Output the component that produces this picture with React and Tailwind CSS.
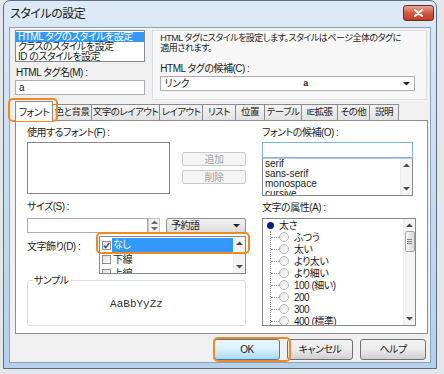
import React from "react";

const ui = "[font-family:'Liberation_Sans','Noto_Sans_CJK_JP',sans-serif] [font-feature-settings:'palt'] tracking-[-0.5px]";

function Up({ c = "#4a4a4a" }) {
  return (
    <svg width="7" height="4" viewBox="0 0 7 4">
      <path d="M0 4 L3.5 0.5 L7 4 Z" fill={c} />
    </svg>
  );
}

function Down({ c = "#4a4a4a" }) {
  return (
    <svg width="7" height="4" viewBox="0 0 7 4">
      <path d="M0 0 L3.5 3.5 L7 0 Z" fill={c} />
    </svg>
  );
}

function ScrollBar({ className = "", thumb = false }) {
  return (
    <div className={`w-[12px] flex flex-col items-center justify-between bg-[#f4f4f4] border-l border-[#ececec] ${className}`}>
      <div className="h-[12px] flex items-center justify-center">
        <Up />
      </div>
      {thumb && (
        <div className="w-[10px] h-[21px] -mt-[62px] rounded-[2px] border border-[#a6a6a6] bg-gradient-to-r from-[#f4f4f4] to-[#d9d9d9] flex flex-col items-center justify-center gap-[1px]">
          <div className="w-[5px] h-px bg-[#808080]" />
          <div className="w-[5px] h-px bg-[#808080]" />
          <div className="w-[5px] h-px bg-[#808080]" />
        </div>
      )}
      <div className="h-[12px] flex items-center justify-center">
        <Down />
      </div>
    </div>
  );
}

function Tab({ label, w, active }) {
  if (active) {
    return (
      <div className={`${w} h-[20px] -mb-px relative z-10 bg-white border border-b-0 border-[#898c95] flex items-center justify-center text-[10px] pt-px`}>
        {label}
      </div>
    );
  }
  return (
    <div className={`${w} h-[16px] -ml-px bg-gradient-to-b from-[#f3f3f3] to-[#e2e2e2] border border-b-0 border-[#898c95] flex items-center justify-center text-[9.5px] whitespace-nowrap overflow-hidden`}>
      {label}
    </div>
  );
}

function Radio({ label }) {
  return (
    <div className="flex items-center h-[12px]">
      <div className="w-[8px] border-t border-dotted border-[#8a8a8a]" />
      <div className="w-[10px] h-[10px] rounded-full border border-[#b4b4b4] bg-gradient-to-br from-[#e6e6e6] to-white" />
      <span className="ml-[5px] whitespace-nowrap">{label}</span>
    </div>
  );
}

function Btn({ label, def, disabled }) {
  if (disabled) {
    return (
      <div className="w-[64px] h-[14px] border border-[#c9cccf] rounded-[2px] bg-[#f4f4f4] text-[#a3a3a3] flex items-center justify-center text-[10px]">
        {label}
      </div>
    );
  }
  return (
    <div
      className={`w-[66px] h-[21px] rounded-[3px] border flex items-center justify-center text-[10px] ${
        def
          ? "border-[#3c7fb1] bg-gradient-to-b from-[#eaf6fd] via-[#d9f0fc] to-[#a7d9f5]"
          : "border-[#707070] bg-gradient-to-b from-[#f2f2f2] via-[#ebebeb] to-[#cfcfcf]"
      }`}
    >
      {label}
    </div>
  );
}

export default function App() {
  return (
    <div className={`w-[444px] h-[374px] relative overflow-hidden bg-[#e4e7ea] text-[#1a1a1a] ${ui}`}>
      {/* window */}
      <div className="ml-[3px] w-[434px] h-[369px] rounded-t-[7px] border border-[#5b6f86] bg-gradient-to-b from-[#dde9f6] via-[#c9dcf0] to-[#b6cfea] flex flex-col">
        {/* title bar */}
        <div className="h-[26px] flex items-start justify-between pl-[6px] pr-[2px]">
          <span className="mt-[6px] text-[12px] leading-[14px] text-[#1a1a1a]">スタイルの設定</span>
          <div className="mt-[4px] w-[31px] h-[16px] rounded-[3px] border border-[#6d2a22] bg-gradient-to-b from-[#e8a493] via-[#cf5c44] to-[#c23b22] flex items-center justify-center">
            <svg width="9" height="8" viewBox="0 0 9 8">
              <path d="M1 1 L8 7 M8 1 L1 7" stroke="#fff" strokeWidth="2" strokeLinecap="round" />
            </svg>
          </div>
        </div>

        {/* client */}
        <div className="mx-[5px] h-[336px] border border-[#8ea3ba] bg-[#f0f0f0] flex flex-col pl-[5px] pr-[3px] pt-[2px]">
          {/* top section */}
          <div className="flex h-[70px]">
            <div className="w-[132px] flex flex-col">
              <div className="h-[32px] border border-[#828790] bg-white text-[10px] leading-[10px] pt-px">
                <div className="bg-[#3399ff] text-white pl-[2px] whitespace-nowrap">HTML タグのスタイルを設定</div>
                <div className="pl-[2px] whitespace-nowrap">クラスのスタイルを設定</div>
                <div className="pl-[2px] whitespace-nowrap">ID のスタイルを設定</div>
              </div>
              <div className="mt-[5px] text-[10px] leading-[12px] pl-px">HTML タグ名(M) :</div>
              <div className="mt-px h-[15px] border border-[#abadb3] bg-white text-[10px] leading-[13px] pl-[3px]">a</div>
            </div>
            <div className="ml-[7px] w-[278px] h-[70px] border border-[#dadfe3] bg-[#f7f7f7] pl-[7px] pt-[2px]">
              <div className="text-[9px] leading-[10px] whitespace-nowrap">
                HTML タグにスタイルを設定します。スタイルはページ全体のタグに
              </div>
              <div className="text-[9px] leading-[10px]">適用されます。</div>
              <div className="mt-[10px] text-[10px] leading-[12px]">HTML タグの候補(C) :</div>
              <div className="mt-px w-[255px] h-[15px] border border-[#abadb3] bg-white flex items-center text-[10px] pl-[3px] pr-[4px]">
                <span className="w-[139px]">リンク</span>
                <span className="flex-1 font-bold text-[9px]">a</span>
                <Down c="#222" />
              </div>
            </div>
          </div>

          {/* tabs */}
          <div className="flex items-end h-[19px] mt-px">
            <Tab label="フォント" w="w-[38px]" active />
            <Tab label="色と背景" w="w-[40px]" />
            <Tab label="文字のレイアウト" w="w-[69px]" />
            <Tab label="レイアウト" w="w-[44px]" />
            <Tab label="リスト" w="w-[34px]" />
            <Tab label="位置" w="w-[30px]" />
            <Tab label="テーブル" w="w-[38px]" />
            <Tab label="IE拡張" w="w-[37px]" />
            <Tab label="その他" w="w-[33px]" />
            <Tab label="説明" w="w-[30px]" />
          </div>

          {/* tab page */}
          <div className="w-[413px] h-[214px] border border-[#898c95] bg-white flex pl-[11px] pt-[6px] text-[10px]">
            {/* left column */}
            <div className="w-[219px] flex flex-col">
              <div className="leading-[11px]">使用するフォント(F) :</div>
              <div className="mt-[4px] flex">
                <div className="w-[151px] h-[52px] border border-[#828790] bg-white" />
                <div className="ml-[12px] pt-[10px] flex flex-col gap-[4px]">
                  <Btn label="追加" disabled />
                  <Btn label="削除" disabled />
                </div>
              </div>
              <div className="mt-[7px] leading-[11px]">サイズ(S) :</div>
              <div className="mt-[6px] flex h-[15px]">
                <div className="w-[121px] border border-[#abadb3] bg-white" />
                <div className="w-[12px] border border-[#c3c3c3] bg-[#f0f0f0] flex flex-col items-center justify-around">
                  <Up c="#6b6b6b" />
                  <Down c="#6b6b6b" />
                </div>
                <div className="ml-[6px] w-[80px] border border-[#8e8f8f] rounded-[2px] bg-gradient-to-b from-[#f2f2f2] to-[#dcdcdc] flex items-center pl-[4px] pr-[5px]">
                  <span className="flex-1">予約語</span>
                  <Down c="#222" />
                </div>
              </div>
              <div className="mt-[3px] flex justify-between">
                <div className="mt-[5px] leading-[11px]">文字飾り(D) :</div>
                <div className="w-[147px] h-[38px] border border-[#828790] bg-white flex overflow-hidden">
                  <div className="flex-1 pt-px">
                    <div className="h-[14px] flex items-center pl-[2px]">
                      <div className="w-[9px] h-[9px] border border-[#8f8f8f] bg-gradient-to-br from-[#dcdcdc] to-white flex items-center justify-center">
                        <svg width="7" height="7" viewBox="0 0 7 7">
                          <path d="M0.8 3.6 L2.8 5.6 L6.2 1" stroke="#3b4f86" strokeWidth="1.5" fill="none" />
                        </svg>
                      </div>
                      <div className="ml-px flex-1 h-[14px] bg-[#3399ff] text-white leading-[14px] pl-px">なし</div>
                    </div>
                    <div className="h-[14px] flex items-center pl-[2px]">
                      <div className="w-[9px] h-[9px] border border-[#8f8f8f] bg-gradient-to-br from-[#dcdcdc] to-white" />
                      <span className="ml-[2px]">下線</span>
                    </div>
                    <div className="h-[14px] flex items-center pl-[2px]">
                      <div className="w-[9px] h-[9px] border border-[#8f8f8f] bg-gradient-to-br from-[#dcdcdc] to-white" />
                      <span className="ml-[2px]">上線</span>
                    </div>
                  </div>
                  <ScrollBar />
                </div>
              </div>
              <fieldset className="mt-[1px] w-[219px] h-[51px] border border-[#d5dfe5] rounded-[3px] px-[5px]">
                <legend className="px-[1px] leading-[11px]">サンプル</legend>
                <div className="text-center mt-[12px] text-[11px] leading-[12px] tracking-normal font-mono text-[#333]">
                  AaBbYyZz
                </div>
              </fieldset>
            </div>

            {/* right column */}
            <div className="ml-[16px] w-[154px] flex flex-col">
              <div className="leading-[11px]">フォントの候補(O) :</div>
              <div className="mt-[4px] w-[151px] h-[16px] border border-[#7eb4ea] bg-white" />
              <div className="w-[151px] h-[38px] border border-[#828790] border-t-[#c5c5c5] bg-white flex overflow-hidden">
                <div className="flex-1 pl-[2px] leading-[10px] text-[10px] tracking-normal">
                  <div>serif</div>
                  <div>sans-serif</div>
                  <div>monospace</div>
                  <div>cursive</div>
                </div>
                <ScrollBar />
              </div>
              <div className="mt-[6px] leading-[11px]">文字の属性(A) :</div>
              <div className="mt-[5px] w-[154px] h-[108px] border border-[#828790] bg-white flex overflow-hidden">
                <div className="flex-1 pl-[4px]">
                  <div className="h-[12px] flex items-center">
                    <div className="w-[7px] h-[7px] rounded-full bg-[#0b1d8a]" />
                    <span className="ml-[5px]">太さ</span>
                  </div>
                  <div className="ml-[3px] border-l border-dotted border-[#8a8a8a]">
                    <Radio label="ふつう" />
                    <Radio label="太い" />
                    <Radio label="より太い" />
                    <Radio label="より細い" />
                    <Radio label="100 (細い)" />
                    <Radio label="200" />
                    <Radio label="300" />
                    <Radio label="400 (標準)" />
                  </div>
                </div>
                <ScrollBar thumb />
              </div>
            </div>
          </div>

          {/* buttons */}
          <div className="mt-[5px] flex justify-end gap-[7px] pr-[1px]">
            <Btn label="OK" def />
            <Btn label="キャンセル" />
            <Btn label="ヘルプ" />
          </div>
        </div>
      </div>

      {/* orange highlights */}
      <div className="absolute left-[8px] top-[98px] w-[50px] h-[24px] rounded-[5px] border-2 border-[#f5891f]" />
      <div className="absolute left-[96px] top-[232px] w-[154px] h-[22px] rounded-[5px] border-2 border-[#f5891f]" />
      <div className="absolute left-[213px] top-[337px] w-[78px] h-[25px] rounded-[5px] border-2 border-[#f5891f]" />
    </div>
  );
}
